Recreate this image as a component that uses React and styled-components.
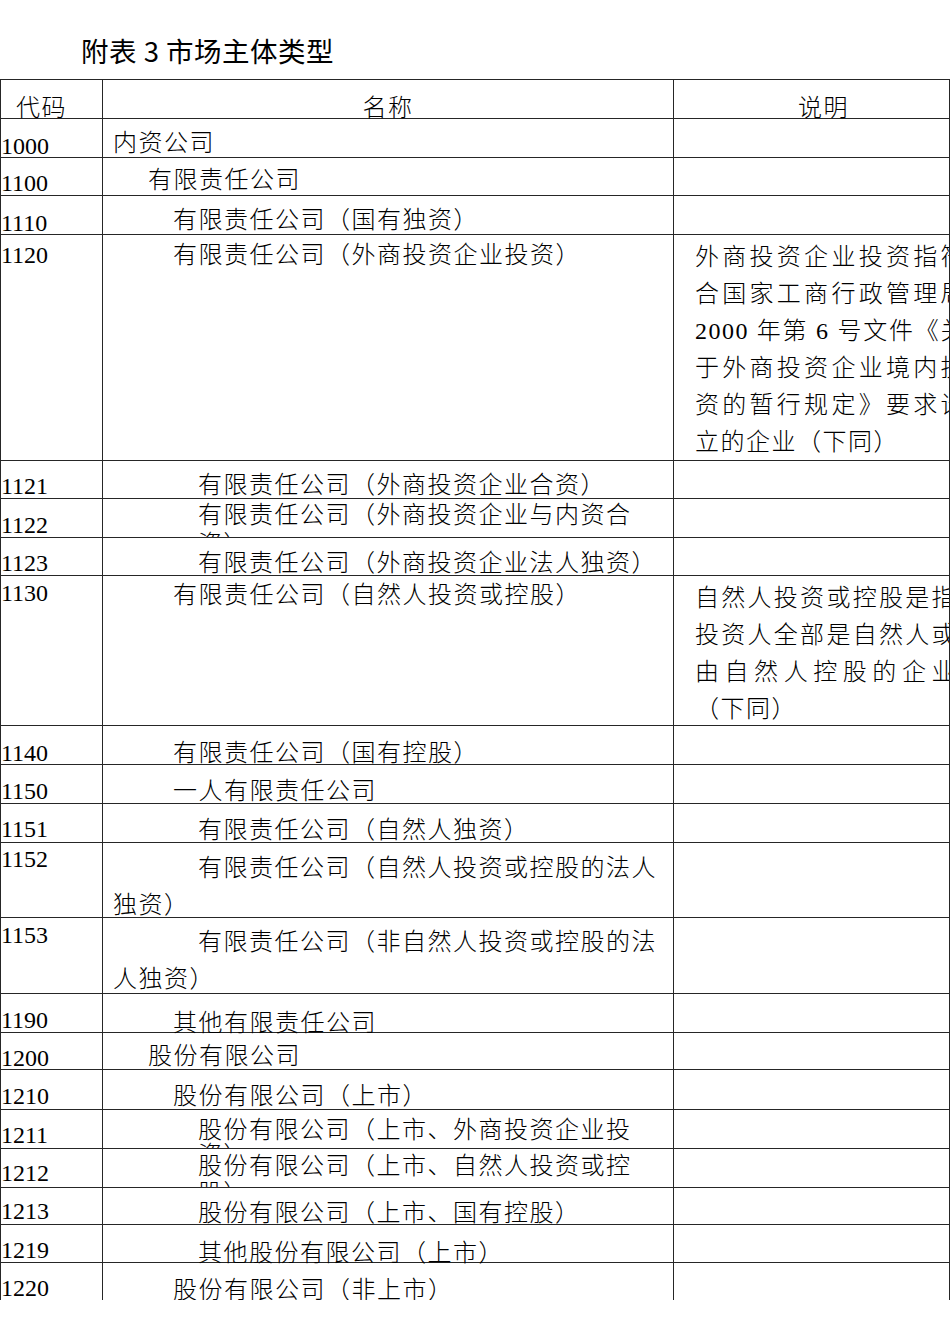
import React from 'react';
import styled, { createGlobalStyle } from 'styled-components';

const GlobalStyle = createGlobalStyle`
  html, body { margin: 0; padding: 0; background: #ffffff; }
  body {
    color: #000;
    font-family: "Liberation Serif", "Noto Sans CJK SC", serif;
  }
`;

const LINE = '#262626';
const TEXT_FONT = '"Liberation Serif", "Noto Sans CJK SC", serif';

const Page = styled.div`
  width: 950px;
`;

const Title = styled.h1`
  margin: 0;
  box-sizing: border-box;
  height: 79px;
  padding: 37px 0 0 81px;
  font-family: "Noto Sans CJK SC", sans-serif;
  font-weight: 400;
  font-size: 27.5px;
  letter-spacing: 0.5px;
  line-height: 1;
  color: #000;
  white-space: pre;
`;

const Table = styled.div`
  box-sizing: border-box;
  width: 950px;
  border-left: 1px solid ${LINE};
  border-right: 1px solid ${LINE};
`;

const Row = styled.div`
  box-sizing: border-box;
  display: grid;
  grid-template-columns: 101px 571px 276px;
  height: ${(p) => p.$h}px;
  border-top: 1px solid ${LINE};
`;

const Cell = styled.div`
  box-sizing: border-box;
  min-width: 0;
  font-family: ${TEXT_FONT};
  font-size: 24px;
  font-weight: 300;
  color: #000;
`;

const HeaderCell = styled(Cell)`
  padding-top: 17.8px;
  padding-left: ${(p) => p.$pl || 0}px;
  text-align: ${(p) => p.$align || 'left'};
  line-height: 20px;
  letter-spacing: 1.5px;
  border-left: ${(p) => (p.$divider ? `1px solid ${LINE}` : 'none')};
`;

const CodeCell = styled(Cell)`
  padding-top: ${(p) => p.$pt}px;
  line-height: 20px;
  font-weight: 400;
`;

const NameCell = styled(Cell)`
  overflow: ${(p) => (p.$clip ? 'hidden' : 'visible')};
  border-left: 1px solid ${LINE};
  padding: ${(p) => p.$pt}px 4px 0 ${(p) => 10 + (p.$clip ? p.$indent : 0)}px;
  line-height: ${(p) => p.$lh}px;
  letter-spacing: 1.5px;
  text-indent: ${(p) => (p.$clip ? 0 : p.$indent)}px;
`;

const DescCell = styled(Cell)`
  overflow: hidden;
  border-left: 1px solid ${LINE};
  padding: ${(p) => p.$pt}px 0 0 21px;
  line-height: 37px;
  letter-spacing: 1.5px;
`;

const DescBlock = styled.div`
  width: ${(p) => p.$w}px;
`;

const DescLine = styled.div`
  white-space: nowrap;
  text-align: ${(p) => (p.$justify ? 'justify' : 'left')};
  text-align-last: ${(p) => (p.$justify ? 'justify' : 'auto')};
`;

const rows = [
  { code: '1000', name: '内资公司', indent: 0, h: 39, nt: 12, cb: 35 },
  { code: '1100', name: '有限责任公司', indent: 35, h: 38, nt: 10, cb: 33 },
  { code: '1110', name: '有限责任公司（国有独资）', indent: 60, h: 39, nt: 12, cb: 35 },
  {
    code: '1120', name: '有限责任公司（外商投资企业投资）', indent: 60, h: 226, nt: 9, cb: 27.7, lh: 37,
    desc: {
      w: 271,
      lines: ['外商投资企业投资指符', '合国家工商行政管理局', '2000 年第 6 号文件《关', '于外商投资企业境内投', '资的暂行规定》要求设', '立的企业（下同）'],
    },
  },
  { code: '1121', name: '有限责任公司（外商投资企业合资）', indent: 85, h: 38, nt: 12, cb: 33 },
  { code: '1122', name: '有限责任公司（外商投资企业与内资合资）', indent: 85, h: 39, nt: 5, cb: 34, lh: 29, clip: true },
  { code: '1123', name: '有限责任公司（外商投资企业法人独资）', indent: 85, h: 38, nt: 13, cb: 33 },
  {
    code: '1130', name: '有限责任公司（自然人投资或控股）', indent: 60, h: 150, nt: 8, cb: 25, lh: 37,
    desc: {
      w: 262,
      lines: ['自然人投资或控股是指', '投资人全部是自然人或', '由自然人控股的企业', '（下同）'],
    },
  },
  { code: '1140', name: '有限责任公司（国有控股）', indent: 60, h: 39, nt: 15, cb: 35 },
  { code: '1150', name: '一人有限责任公司', indent: 60, h: 39, nt: 14, cb: 34 },
  { code: '1151', name: '有限责任公司（自然人独资）', indent: 85, h: 39, nt: 14, cb: 33 },
  { code: '1152', name: '有限责任公司（自然人投资或控股的法人独资）', indent: 85, h: 75, nt: 14, cb: 24, lh: 37 },
  { code: '1153', name: '有限责任公司（非自然人投资或控股的法人独资）', indent: 85, h: 76, nt: 13, cb: 25, lh: 37 },
  { code: '1190', name: '其他有限责任公司', indent: 60, h: 39, nt: 17, cb: 34 },
  { code: '1200', name: '股份有限公司', indent: 35, h: 37, nt: 11, cb: 33 },
  { code: '1210', name: '股份有限公司（上市）', indent: 60, h: 40, nt: 14, cb: 34 },
  { code: '1211', name: '股份有限公司（上市、外商投资企业投资）', indent: 85, h: 39, nt: 9, cb: 33, lh: 25, clip: true },
  { code: '1212', name: '股份有限公司（上市、自然人投资或控股）', indent: 85, h: 39, nt: 6, cb: 32, lh: 27, clip: true },
  { code: '1213', name: '股份有限公司（上市、国有控股）', indent: 85, h: 37, nt: 13, cb: 31 },
  { code: '1219', name: '其他股份有限公司（上市）', indent: 85, h: 38, nt: 16, cb: 33 },
  { code: '1220', name: '股份有限公司（非上市）', indent: 60, h: 38, nt: 15, cb: 33 },
];

// glyph top inside a line box of height lh (24px text, Liberation Serif strut)
const glyphTop = (lh) => lh / 2 - 11.8;
// baseline of 24px Liberation Serif digits in a 20px line box
const CODE_BASELINE = 18.1;

export default function App() {
  return (
    <Page>
      <GlobalStyle />
      <Title>{'附表 3 市场主体类型'}</Title>
      <Table>
        <Row $h={39}>
          <HeaderCell $pl={15}>代码</HeaderCell>
          <HeaderCell $divider $align="center">名称</HeaderCell>
          <HeaderCell $divider $align="center" $pl={24}>说明</HeaderCell>
        </Row>
        {rows.map((r) => {
          const lh = r.lh || 22;
          return (
            <Row key={r.code} $h={r.h}>
              <CodeCell $pt={r.cb - CODE_BASELINE}>{r.code}</CodeCell>
              <NameCell
                $pt={r.nt - glyphTop(lh)}
                $lh={lh}
                $indent={r.indent}
                $clip={r.clip}
              >
                {r.name}
              </NameCell>
              <DescCell $pt={11 - glyphTop(37)}>
                {r.desc && (
                  <DescBlock $w={r.desc.w}>
                    {r.desc.lines.map((line, i) => (
                      <DescLine key={i} $justify={i < r.desc.lines.length - 1}>
                        {line}
                      </DescLine>
                    ))}
                  </DescBlock>
                )}
              </DescCell>
            </Row>
          );
        })}
      </Table>
    </Page>
  );
}
